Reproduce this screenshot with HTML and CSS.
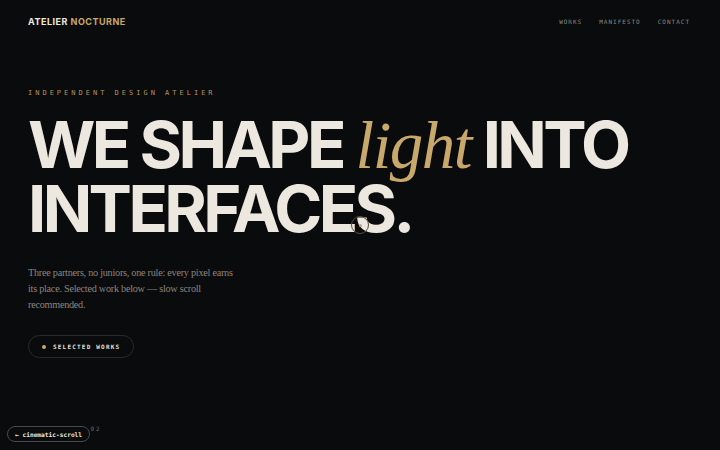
FILE: index.html
```html
<!DOCTYPE html>
<html lang="en">
<head>
<meta charset="utf-8">
<title>Atelier Nocturne</title>
<link rel="stylesheet" href="styles.css">
</head>
<body>
<div class="page">
  <header class="top">
    <div class="logo"><span class="logo-a">ATELIER</span> <span class="logo-b">NOCTURNE</span></div>
    <nav class="nav">
      <a href="#">WORKS</a>
      <a href="#">MANIFESTO</a>
      <a href="#">CONTACT</a>
    </nav>
  </header>
  <main class="hero">
    <p class="eyebrow">INDEPENDENT DESIGN ATELIER</p>
    <h1 class="title"><span>WE SHAPE <em class="light">light</em> INTO</span><span>INTERFACES.</span></h1>
    <p class="lede">Three partners, no juniors, one rule: every pixel earns<br>its place. Selected work below — slow scroll<br>recommended.</p>
    <a class="cta" href="#"><span class="dot"></span>SELECTED WORKS</a>
  </main>
  <div class="foot">SCROLL · 02</div>
</div>
<div class="cursor"><span class="cursor-dot"></span></div>
<div class="badge">← cinematic-scroll</div>
</body>
</html>
```
FILE: styles.css
```css
html, body {
  margin: 0;
  padding: 0;
  background: #0a0b0d;
  height: 100%;
  overflow: hidden;
}
.page {
  height: 450px;
  display: flex;
  flex-direction: column;
  padding: 0 30px 0 28px;
  box-sizing: border-box;
}
.top {
  height: 42px;
  display: flex;
  align-items: center;
  justify-content: space-between;
}
.logo {
  font-family: "Inter", "Liberation Sans", sans-serif;
  font-weight: 700;
  font-size: 9px;
  letter-spacing: 0.5px;
}
.logo-a { color: #ece8df; }
.logo-b { color: #c9a96b; }
.nav {
  display: flex;
  gap: 17px;
}
.nav a {
  font-family: "DejaVu Sans Mono", "Liberation Mono", monospace;
  font-size: 6px;
  letter-spacing: 1px;
  color: #8b8882;
  text-decoration: none;
}
.hero {
  display: flex;
  flex-direction: column;
  align-items: flex-start;
}
.eyebrow {
  margin: 46px 0 0;
  font-family: "DejaVu Sans Mono", "Liberation Mono", monospace;
  font-size: 7px;
  letter-spacing: 3px;
  color: #b4925a;
  line-height: 10px;
}
.title {
  margin: 15px 0 0;
  font-family: "Inter", "Liberation Sans", sans-serif;
  font-weight: 700;
  font-size: 65px;
  line-height: 64px;
  letter-spacing: -3.6px;
  color: #ece8df;
  display: flex;
  flex-direction: column;
}
.light {
  font-family: "Liberation Serif", "DejaVu Serif", serif;
  font-style: italic;
  font-weight: 400;
  font-size: 67px;
  line-height: 0;
  letter-spacing: -1.5px;
  color: #c9a96b;
  margin: 0 0 0 1px;
}
.lede {
  margin: 24px 0 0;
  font-family: "Liberation Serif", "DejaVu Serif", serif;
  font-size: 10.2px;
  line-height: 16px;
  letter-spacing: -0.25px;
  color: #8a857e;
}
.cta {
  margin-top: 22px;
  height: 23px;
  box-sizing: border-box;
  padding: 0 13px 0 13px;
  border: 1px solid #2a2a2b;
  border-radius: 12px;
  display: inline-flex;
  align-items: center;
  gap: 7px;
  font-family: "DejaVu Sans Mono", "Liberation Mono", monospace;
  font-weight: 700;
  font-size: 6px;
  letter-spacing: 1.2px;
  color: #e6e2d9;
  text-decoration: none;
}
.dot {
  width: 4px;
  height: 4px;
  border-radius: 50%;
  background: #c9a96b;
}
.foot {
  margin-top: auto;
  margin-bottom: 18px;
  font-family: "DejaVu Sans Mono", "Liberation Mono", monospace;
  font-size: 6px;
  letter-spacing: 2px;
  color: #6f6c67;
  padding-left: 12px;
}
.cursor {
  position: absolute;
  left: 351px;
  top: 216px;
  width: 18px;
  height: 18px;
  border: 1px solid #5c4c31;
  border-radius: 50%;
  box-sizing: border-box;
  display: flex;
  align-items: center;
  justify-content: center;
}
.cursor-dot {
  width: 3px;
  height: 3px;
  border-radius: 50%;
  background: #c9a96b;
}
.badge {
  position: fixed;
  left: 7px;
  bottom: 8px;
  height: 16px;
  padding: 0 7px;
  box-sizing: border-box;
  border: 1px solid #4a4a4c;
  border-radius: 8px;
  background: #0a0b0d;
  display: flex;
  align-items: center;
  font-family: "DejaVu Sans Mono", "Liberation Mono", monospace;
  font-weight: 700;
  font-size: 6.2px;
  color: #ece8df;
}
```
